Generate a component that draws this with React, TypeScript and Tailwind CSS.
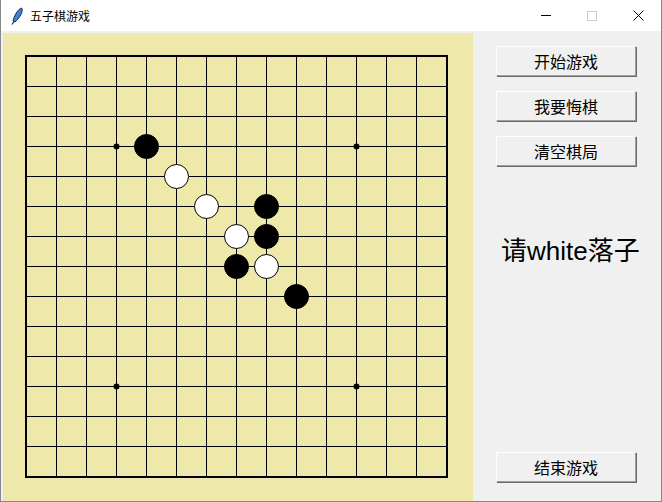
import React from "react";

const CELL = 30;
const OFF = 23;
const N = 15;

type Stone = { x: number; y: number; c: "b" | "w" };

const stones: Stone[] = [
  { x: 4, y: 3, c: "b" },
  { x: 5, y: 4, c: "w" },
  { x: 6, y: 5, c: "w" },
  { x: 8, y: 5, c: "b" },
  { x: 7, y: 6, c: "w" },
  { x: 8, y: 6, c: "b" },
  { x: 7, y: 7, c: "b" },
  { x: 8, y: 7, c: "w" },
  { x: 9, y: 8, c: "b" },
];

const stars = [
  [3, 3],
  [11, 3],
  [3, 11],
  [11, 11],
];

function Board() {
  const end = OFF + CELL * (N - 1);
  const lines = Array.from({ length: N }, (_, i) => OFF + i * CELL);
  return (
    <svg width={470} height={468} className="block">
      {lines.map((p) => (
        <g key={p}>
          <line x1={OFF} y1={p + 0.5} x2={end} y2={p + 0.5} stroke="#000" strokeWidth={1} />
          <line x1={p + 0.5} y1={OFF} x2={p + 0.5} y2={end} stroke="#000" strokeWidth={1} />
        </g>
      ))}
      <rect x={OFF} y={OFF} width={end - OFF + 1} height={end - OFF + 1} fill="none" stroke="#000" strokeWidth={2} />
      {stars.map(([x, y]) => (
        <circle key={`${x}-${y}`} cx={OFF + x * CELL + 0.5} cy={OFF + y * CELL + 0.5} r={3} fill="#000" />
      ))}
      {stones.map((s) => (
        <circle
          key={`${s.x}-${s.y}`}
          cx={OFF + s.x * CELL + 0.5}
          cy={OFF + s.y * CELL + 0.5}
          r={12}
          fill={s.c === "b" ? "#000" : "#fff"}
          stroke="#000"
          strokeWidth={1}
        />
      ))}
    </svg>
  );
}

function TkButton({ label, className = "" }: { label: string; className?: string }) {
  return (
    <button
      className={`w-[140px] h-[30px] bg-[#f0f0f0] border-t border-l border-white border-b border-r border-b-[#a0a0a0] border-r-[#a0a0a0] shadow-[1px_1px_0_#696969] text-[16px] text-black leading-none ${className}`}
      style={{ fontFamily: '"Noto Sans CJK SC", sans-serif' }}
    >
      {label}
    </button>
  );
}

export default function App() {
  return (
    <div
      className="w-[662px] h-[502px] flex flex-col border-x border-b border-[#888888] bg-[#f0f0f0]"
      style={{ fontFamily: '"Noto Sans CJK SC", sans-serif' }}
    >
      {/* 标题栏 */}
      <div className="h-[31px] bg-white flex items-center shrink-0">
        <svg width={16} height={18} viewBox="0 0 16 18" className="ml-[8px]">
          <path d="M12.5 1 C15 3 11 11 6 15 L4 14 C5 9 9 2 12.5 1 Z" fill="#3f7fd6" stroke="#1c2f55" strokeWidth={1} />
          <path d="M5 14.5 L3 17.5" stroke="#1c2f55" strokeWidth={1.2} />
        </svg>
        <span className="ml-[5px] text-[12px] text-black">五子棋游戏</span>
        <div className="ml-auto flex items-center h-full">
          <div className="w-[46px] h-full flex items-center justify-center">
            <div className="w-[10px] h-px bg-black" />
          </div>
          <div className="w-[46px] h-full flex items-center justify-center">
            <div className="w-[10px] h-[10px] border border-[#cccccc]" />
          </div>
          <div className="w-[46px] h-full flex items-center justify-center">
            <svg width={11} height={11} viewBox="0 0 11 11">
              <path d="M0.5 0.5 L10.5 10.5 M10.5 0.5 L0.5 10.5" stroke="#000" strokeWidth={1} />
            </svg>
          </div>
        </div>
      </div>

      {/* 客户区 */}
      <div className="flex flex-1">
        <div className="ml-[2px] mt-[2px] w-[470px] h-[468px] bg-[#eee8aa]">
          <Board />
        </div>
        <div className="flex-1 flex flex-col pl-[23px] pt-[15px]">
          <TkButton label="开始游戏" />
          <TkButton label="我要悔棋" className="mt-[15px]" />
          <TkButton label="清空棋局" className="mt-[15px]" />
          <div
            className="mt-[69px] ml-[5px] text-[26px] leading-[32px] text-black whitespace-nowrap"
            style={{ fontFamily: '"Liberation Sans", "Noto Sans CJK SC", sans-serif' }}
          >
            请white落子
          </div>
          <TkButton label="结束游戏" className="mt-auto mb-[19px]" />
        </div>
      </div>
    </div>
  );
}
